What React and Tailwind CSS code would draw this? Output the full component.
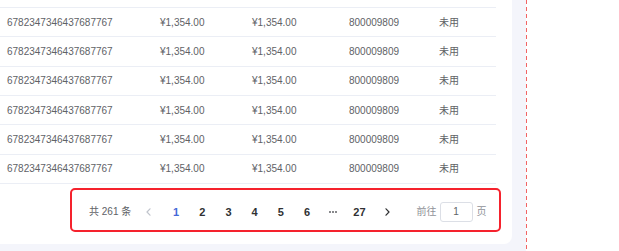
import React from "react";

const rows = Array.from({ length: 6 }, () => ({
  no: "6782347346437687767",
  amount: "¥1,354.00",
  balance: "¥1,354.00",
  code: "800009809",
  status: "未用",
}));

const pages = ["1", "2", "3", "4", "5", "6", "more", "27"];

function Chevron({ dir = "left", color }) {
  return (
    <svg width="5" height="8" viewBox="0 0 5 8" fill="none">
      <polyline
        points={dir === "left" ? "4,0.8 1,4 4,7.2" : "1,0.8 4,4 1,7.2"}
        stroke={color}
        strokeWidth="1.2"
        strokeLinecap="round"
        strokeLinejoin="round"
      />
    </svg>
  );
}

export default function App() {
  return (
    <div
      className="flex w-[619px] h-[251px] bg-white overflow-hidden"
      style={{ fontFamily: '"Liberation Sans", "Noto Sans CJK SC", sans-serif' }}
    >
      {/* page area */}
      <div className="w-[526px] h-full bg-[#f4f5fb] shrink-0">
        <div className="w-[512px] h-[244px] bg-white rounded-br-[8px] flex flex-col">
          {/* table body */}
          <div className="w-[496px] pt-[7px]">
            <div className="border-t border-[#ebeef5]">
              {rows.map((r, i) => (
                <div
                  key={i}
                  className="flex items-center h-[29.33px] border-b border-[#ebeef5] text-[10px] text-[#606266]"
                >
                  <div className="w-[160px] pl-[7px]">{r.no}</div>
                  <div className="w-[92px]">{r.amount}</div>
                  <div className="w-[97px]">{r.balance}</div>
                  <div className="w-[90px]">{r.code}</div>
                  <div className="flex-1">{r.status}</div>
                </div>
              ))}
            </div>
          </div>

          {/* pagination */}
          <div className="mt-[4.5px] ml-[70px] w-[431px] h-[44px] border-2 border-[#f5222d] rounded-[5px] flex items-center pl-[17px] pt-[3px]">
            <span className="w-[46px] text-[10px] text-[#606266] whitespace-nowrap">共 261 条</span>
            <div className="w-[26px] flex justify-center">
              <Chevron dir="left" color="#c0c4cc" />
            </div>
            <div className="ml-[2px] flex">
              {pages.map((p) => (
                <div
                  key={p}
                  className={
                    "w-[26.2px] flex justify-center items-center text-[11px] font-semibold " +
                    (p === "1" ? "text-[#4468d8]" : "text-[#303133]")
                  }
                >
                  {p === "more" ? (
                    <div className="flex gap-[1px]">
                      <span className="w-[2px] h-[2px] rounded-full bg-[#606266]" />
                      <span className="w-[2px] h-[2px] rounded-full bg-[#606266]" />
                      <span className="w-[2px] h-[2px] rounded-full bg-[#606266]" />
                    </div>
                  ) : (
                    p
                  )}
                </div>
              ))}
            </div>
            <div className="w-[27px] ml-[1px] flex justify-center">
              <Chevron dir="right" color="#303133" />
            </div>
            <span className="ml-[16px] text-[10px] text-[#909399] whitespace-nowrap">前往</span>
            <div className="ml-[3px] w-[33px] h-[20px] border border-[#dcdfe6] rounded-[3px] flex items-center justify-center text-[10px] text-[#606266]">
              1
            </div>
            <span className="ml-[4px] text-[10px] text-[#909399]">页</span>
          </div>
        </div>
      </div>

      {/* dashed guide */}
      <div className="w-px h-full shrink-0 bg-[repeating-linear-gradient(to_bottom,#f26464_0px,#f26464_4px,transparent_4px,transparent_7px)]" />
      <div className="flex-1 bg-white" />
    </div>
  );
}
